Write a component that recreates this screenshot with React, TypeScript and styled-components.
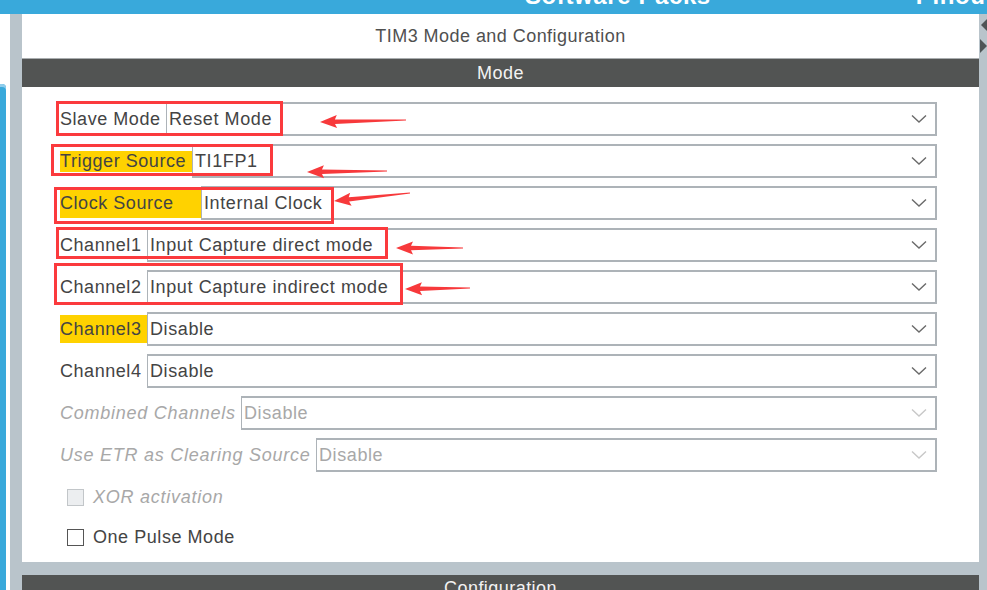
import React from "react";
import styled, { createGlobalStyle } from "styled-components";

const Global = createGlobalStyle`
  html, body { margin: 0; padding: 0; background: #fff; }
  body { font-family: "Liberation Sans", Arial, sans-serif; }
`;

const Page = styled.div`
  position: relative;
  width: 987px;
  height: 590px;
  overflow: hidden;
  display: flex;
  flex-direction: column;
  background: #fff;
`;

const TopBar = styled.div`
  height: 14px;
  flex: none;
  background: #39a9db;
  display: flex;
  align-items: flex-start;
  overflow: hidden;
  padding-left: 525px;
  gap: 205px;
`;

const TopText = styled.span`
  color: #fff;
  font-size: 24px;
  font-weight: bold;
  line-height: 24px;
  margin-top: -16px;
  letter-spacing: 0.6px;
  white-space: nowrap;
`;

const Body = styled.div`
  flex: 1;
  display: flex;
  min-height: 0;
`;

const LeftEdge = styled.div`
  width: 10px;
  flex: none;
  background: #fff;
  padding-top: 70px;
`;

const BlueTab = styled.div`
  width: 6px;
  height: 600px;
  background: #39a9db;
  border-top-right-radius: 4px;
  box-shadow: inset 0 3px 0 #8fcdec;
`;

const Gutter = styled.div`
  width: 12px;
  flex: none;
  background: #b9c4cb;
`;

const Center = styled.div`
  width: 957px;
  flex: none;
  background: #b9c4cb;
  display: flex;
  flex-direction: column;
  gap: 13px;
`;

const RightStrip = styled.div`
  flex: 1;
  background: #b9c4cb;
  padding-top: 5px;
`;

const Panel = styled.div`
  background: #fff;
  display: flex;
  flex-direction: column;
  padding-bottom: 14px;
`;

const Title = styled.div`
  height: 44px;
  display: flex;
  align-items: center;
  justify-content: center;
  color: #505050;
  font-size: 18px;
  letter-spacing: 0.45px;
`;

const SectionHeader = styled.div`
  height: 28px;
  border-top: 1px solid #a9adaf;
  background: #525453;
  color: #f2f2f2;
  font-size: 18px;
  letter-spacing: 0.45px;
  display: flex;
  align-items: center;
  justify-content: center;
`;

const ConfigHeader = styled(SectionHeader)`
  height: 40px;
  border-top: none;
  align-items: flex-start;
  padding-top: 3px;
`;

const Content = styled.div`
  padding: 15px 42px 0 38px;
  display: flex;
  flex-direction: column;
  gap: 8px;
`;

const Row = styled.div`
  display: flex;
  height: 34px;
`;

const Label = styled.div<{ $w: number; $hl?: number; $disabled?: boolean }>`
  width: ${(p) => p.$w}px;
  flex: none;
  align-self: center;
  height: ${(p) => (p.$hl ? `${p.$hl}px` : "auto")};
  display: flex;
  align-items: center;
  background: ${(p) => (p.$hl ? "#ffd200" : "transparent")};
  color: ${(p) => (p.$disabled ? "#a8a8a8" : "#444")};
  font-style: ${(p) => (p.$disabled ? "italic" : "normal")};
  font-size: 18px;
  letter-spacing: ${(p) => (p.$disabled ? "0.75px" : "0.55px")};
  white-space: nowrap;
`;

const Select = styled.div<{ $disabled?: boolean }>`
  flex: 1;
  border: 2px solid #adb3b8;
  border-width: 2px 2px 2px 1.5px;
  display: flex;
  align-items: center;
  justify-content: space-between;
  padding: 0 8px 0 2px;
  color: ${(p) => (p.$disabled ? "#a8a8a8" : "#444")};
  font-size: 18px;
  letter-spacing: 0.6px;
  white-space: nowrap;
`;

const Chevron = ({ disabled }: { disabled?: boolean }) => (
  <svg width="16" height="10" viewBox="0 0 16 10">
    <polyline
      points="1,1.5 8,8 15,1.5"
      fill="none"
      stroke={disabled ? "#c8c8c8" : "#6a6a6a"}
      strokeWidth="1.4"
    />
  </svg>
);

const CheckRow = styled.label<{ $disabled?: boolean }>`
  display: flex;
  align-items: center;
  gap: 9px;
  height: 22px;
  padding-left: 7px;
  color: ${(p) => (p.$disabled ? "#a8a8a8" : "#444")};
  font-style: ${(p) => (p.$disabled ? "italic" : "normal")};
  font-size: 18px;
  letter-spacing: ${(p) => (p.$disabled ? "0.75px" : "0.55px")};
`;

const CheckGroup = styled.div`
  display: flex;
  flex-direction: column;
  gap: 18px;
  margin-top: 6px;
`;

const Box = styled.span<{ $disabled?: boolean }>`
  width: 17px;
  height: 17px;
  box-sizing: border-box;
  border: 1.5px solid ${(p) => (p.$disabled ? "#c2c6c9" : "#555")};
  background: ${(p) => (p.$disabled ? "#eceef0" : "#fff")};
`;

const Overlay = styled.svg`
  position: absolute;
  left: 0;
  top: 0;
  pointer-events: none;
`;

type RowDef = {
  label: string;
  w: number;
  value: string;
  hl?: number;
  disabled?: boolean;
};

const rows: RowDef[] = [
  { label: "Slave Mode", w: 106, value: "Reset Mode" },
  { label: "Trigger Source", w: 132, value: "TI1FP1", hl: 21 },
  { label: "Clock Source", w: 141, value: "Internal Clock", hl: 29 },
  { label: "Channel1", w: 87, value: "Input Capture direct mode" },
  { label: "Channel2", w: 87, value: "Input Capture indirect mode" },
  { label: "Channel3", w: 87, value: "Disable", hl: 28 },
  { label: "Channel4", w: 87, value: "Disable" },
  { label: "Combined Channels", w: 181, value: "Disable", disabled: true },
  { label: "Use ETR as Clearing Source", w: 256, value: "Disable", disabled: true },
];

const boxes = [
  [57.5, 102.5, 224, 32],
  [52.5, 145.5, 219, 29],
  [55.5, 188.5, 277, 34],
  [57.5, 228.5, 329, 29],
  [55.5, 264.5, 346, 39],
];

const arrows: [number, number, number, number][] = [
  [320, 122, 406, 120],
  [307, 172, 387, 171],
  [334, 201, 410, 193],
  [396, 248, 463, 248],
  [405, 289, 470, 288],
];

function arrowPoints(tx: number, ty: number, ex: number, ey: number) {
  const dx = ex - tx;
  const dy = ey - ty;
  const L = Math.hypot(dx, dy);
  const ux = dx / L;
  const uy = dy / L;
  const vx = -uy;
  const vy = ux;
  const local: [number, number][] = [
    [0, 0],
    [17, -6.5],
    [15, -2.2],
    [L, -0.6],
    [L, 0.6],
    [15, 2.2],
    [17, 6.5],
  ];
  return local
    .map(([a, b]) => `${(tx + ux * a + vx * b).toFixed(1)},${(ty + uy * a + vy * b).toFixed(1)}`)
    .join(" ");
}

export default function App() {
  return (
    <>
      <Global />
      <Page>
        <TopBar>
          <TopText>Software Packs</TopText>
          <TopText>Pinout</TopText>
        </TopBar>
        <Body>
          <LeftEdge>
            <BlueTab />
          </LeftEdge>
          <Gutter />
          <Center>
            <Panel>
              <Title>TIM3 Mode and Configuration</Title>
              <SectionHeader>Mode</SectionHeader>
              <Content>
                {rows.map((r) => (
                  <Row key={r.label}>
                    <Label $w={r.w} $hl={r.hl} $disabled={r.disabled}>
                      {r.label}
                    </Label>
                    <Select $disabled={r.disabled}>
                      <span>{r.value}</span>
                      <Chevron disabled={r.disabled} />
                    </Select>
                  </Row>
                ))}
                <CheckGroup>
                  <CheckRow $disabled>
                    <Box $disabled />
                    XOR activation
                  </CheckRow>
                  <CheckRow>
                    <Box />
                    One Pulse Mode
                  </CheckRow>
                </CheckGroup>
              </Content>
            </Panel>
            <ConfigHeader>Configuration</ConfigHeader>
          </Center>
          <RightStrip>
            <svg width="8" height="40" viewBox="0 0 8 40">
              <polygon points="8,0 2,6 8,12" fill="#4f5456" />
              <polygon points="1,20 8,27 1,34" fill="#4f5456" />
            </svg>
          </RightStrip>
        </Body>
        <Overlay width="987" height="590" viewBox="0 0 987 590">
          {boxes.map(([x, y, w, h], i) => (
            <rect key={i} x={x} y={y} width={w} height={h} fill="none" stroke="#fb3a3d" strokeWidth="3" />
          ))}
          {arrows.map((a, i) => (
            <polygon key={i} points={arrowPoints(a[0], a[1], a[2], a[3])} fill="#f7393b" />
          ))}
        </Overlay>
      </Page>
    </>
  );
}
